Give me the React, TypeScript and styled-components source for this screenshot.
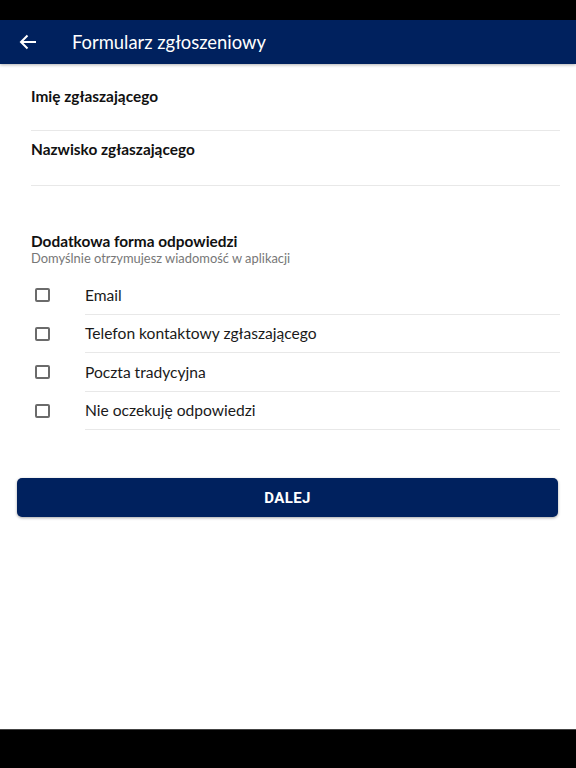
import styled, { createGlobalStyle } from "styled-components";

const Global = createGlobalStyle`
  html, body { margin: 0; padding: 0; background: #000; }
  * { box-sizing: border-box; }
`;

const Screen = styled.div`
  width: 576px;
  height: 768px;
  display: flex;
  flex-direction: column;
  background: #000;
  font-family: Lato, "Noto Sans", sans-serif;
`;

const StatusBar = styled.div`
  height: 20px;
  background: #000;
  flex-shrink: 0;
`;

const Header = styled.div`
  height: 44px;
  flex-shrink: 0;
  background: #00215e;
  display: flex;
  align-items: center;
  padding-left: 18px;
  box-shadow: 0 1px 3px rgba(0, 0, 0, 0.3);
  position: relative;
  z-index: 1;
`;

const BackButton = styled.div`
  width: 20px;
  height: 20px;
  display: flex;
  align-items: center;
  justify-content: center;
`;

const Title = styled.div`
  margin-left: 34px;
  color: #fff;
  font-size: 18.4px;
`;

const Body = styled.div`
  flex: 1;
  background: #fff;
  display: flex;
  flex-direction: column;
  padding: 0 16px 0 31px;
`;

const Field = styled.div<{ $top: number; $height: number }>`
  height: ${(p) => p.$height}px;
  padding-top: ${(p) => p.$top}px;
  border-bottom: 1px solid #e8e8e8;
  font-weight: 700;
  font-size: 15.4px;
  line-height: 18px;
  color: #111;
`;

const Section = styled.div`
  margin-top: 46px;
`;

const SectionTitle = styled.div`
  font-weight: 700;
  font-size: 15.4px;
  color: #111;
  line-height: 18px;
`;

const SectionHint = styled.div`
  font-size: 12.9px;
  color: #777;
  line-height: 16px;
`;

const Options = styled.div`
  margin-top: 10px;
  display: flex;
  flex-direction: column;
`;

const OptionRow = styled.div`
  display: flex;
  align-items: center;
  height: 38.5px;
`;

const Box = styled.div`
  width: 15px;
  height: 14px;
  border: 2px solid #6b6b6b;
  border-radius: 2px;
  margin-left: 4px;
  flex-shrink: 0;
`;

const OptionLabel = styled.div`
  margin-left: 35px;
  flex: 1;
  height: 100%;
  display: flex;
  align-items: center;
  border-bottom: 1px solid #e8e8e8;
  font-size: 15.6px;
  color: #1a1a1a;
`;

const Submit = styled.button`
  margin: 48px 0 0 -14px;
  height: 39px;
  width: 541px;
  border: none;
  border-radius: 5px;
  background: #00215e;
  color: #fff;
  font-family: Roboto, "Liberation Sans", sans-serif;
  font-weight: 700;
  font-size: 15px;
  letter-spacing: 0.4px;
  box-shadow: 0 1px 3px rgba(0, 0, 0, 0.35);
`;

const BottomBar = styled.div`
  height: 39px;
  flex-shrink: 0;
  background: #000;
  border-top: 1px solid #444;
`;

const options = [
  "Email",
  "Telefon kontaktowy zgłaszającego",
  "Poczta tradycyjna",
  "Nie oczekuję odpowiedzi",
];

export default function App() {
  return (
    <Screen>
      <Global />
      <StatusBar />
      <Header>
        <BackButton>
          <svg width="18" height="16" viewBox="0 0 18 16" fill="none">
            <path d="M17 8H2M8.5 1.5L2 8l6.5 6.5" stroke="#fff" strokeWidth="2" />
          </svg>
        </BackButton>
        <Title>Formularz zgłoszeniowy</Title>
      </Header>
      <Body>
        <Field $top={23} $height={67}>Imię zgłaszającego</Field>
        <Field $top={9} $height={55}>Nazwisko zgłaszającego</Field>
        <Section>
          <SectionTitle>Dodatkowa forma odpowiedzi</SectionTitle>
          <SectionHint>Domyślnie otrzymujesz wiadomość w aplikacji</SectionHint>
          <Options>
            {options.map((o) => (
              <OptionRow key={o}>
                <Box />
                <OptionLabel>{o}</OptionLabel>
              </OptionRow>
            ))}
          </Options>
        </Section>
        <Submit>DALEJ</Submit>
      </Body>
      <BottomBar />
    </Screen>
  );
}
